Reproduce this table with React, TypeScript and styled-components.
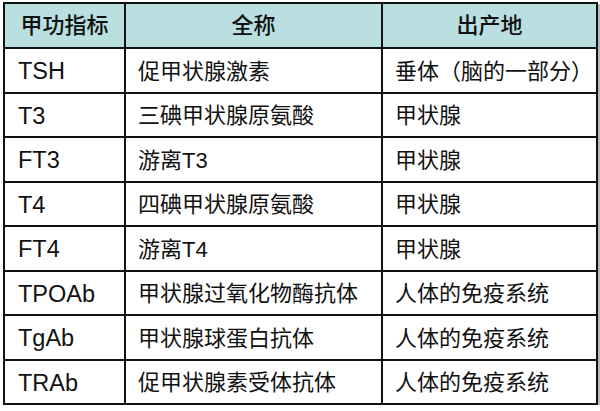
import { createGlobalStyle, styled } from "styled-components";

const GlobalStyle = createGlobalStyle`
  html, body {
    margin: 0;
    padding: 0;
    background: #ffffff;
  }
  body {
    font-family: "Liberation Sans", "Noto Sans CJK SC", sans-serif;
  }
`;

const Page = styled.div`
  padding: 2px 0 0 3px;
`;

const Table = styled.table`
  width: 593px;
  border-collapse: collapse;
  table-layout: fixed;
  border: 2.5px solid #111;
  box-shadow: 2px 2px 0 rgba(0, 0, 0, 0.28);
  font-size: 22px;
  line-height: 1;
  color: #111;
`;

const HeadCell = styled.th`
  height: 43px;
  padding: 0;
  background: #b9dfe0;
  border: 2.5px solid #111;
  font-weight: 500;
  text-align: center;
  vertical-align: middle;
`;

const BodyRow = styled.tr`
  height: 44.5px;
`;

const Cell = styled.td<{ $code?: boolean }>`
  padding: 3px 0 0 ${(p) => (p.$code ? 13 : 12)}px;
  border: 2.5px solid #111;
  font-size: ${(p) => (p.$code ? 23.5 : 22)}px;
  text-align: left;
  vertical-align: middle;
  white-space: nowrap;
`;

interface Row {
  readonly code: string;
  readonly name: string;
  readonly origin: string;
}

const rows: Row[] = [
  { code: "TSH", name: "促甲状腺激素", origin: "垂体（脑的一部分）" },
  { code: "T3", name: "三碘甲状腺原氨酸", origin: "甲状腺" },
  { code: "FT3", name: "游离T3", origin: "甲状腺" },
  { code: "T4", name: "四碘甲状腺原氨酸", origin: "甲状腺" },
  { code: "FT4", name: "游离T4", origin: "甲状腺" },
  { code: "TPOAb", name: "甲状腺过氧化物酶抗体", origin: "人体的免疫系统" },
  { code: "TgAb", name: "甲状腺球蛋白抗体", origin: "人体的免疫系统" },
  { code: "TRAb", name: "促甲状腺素受体抗体", origin: "人体的免疫系统" },
];

export default function App() {
  return (
    <Page>
      <GlobalStyle />
      <Table>
        <colgroup>
          <col style={{ width: 121 }} />
          <col style={{ width: 257 }} />
          <col style={{ width: 215 }} />
        </colgroup>
        <thead>
          <tr>
            <HeadCell>甲功指标</HeadCell>
            <HeadCell>全称</HeadCell>
            <HeadCell>出产地</HeadCell>
          </tr>
        </thead>
        <tbody>
          {rows.map((row) => (
            <BodyRow key={row.code}>
              <Cell $code>{row.code}</Cell>
              <Cell>{row.name}</Cell>
              <Cell>{row.origin}</Cell>
            </BodyRow>
          ))}
        </tbody>
      </Table>
    </Page>
  );
}
